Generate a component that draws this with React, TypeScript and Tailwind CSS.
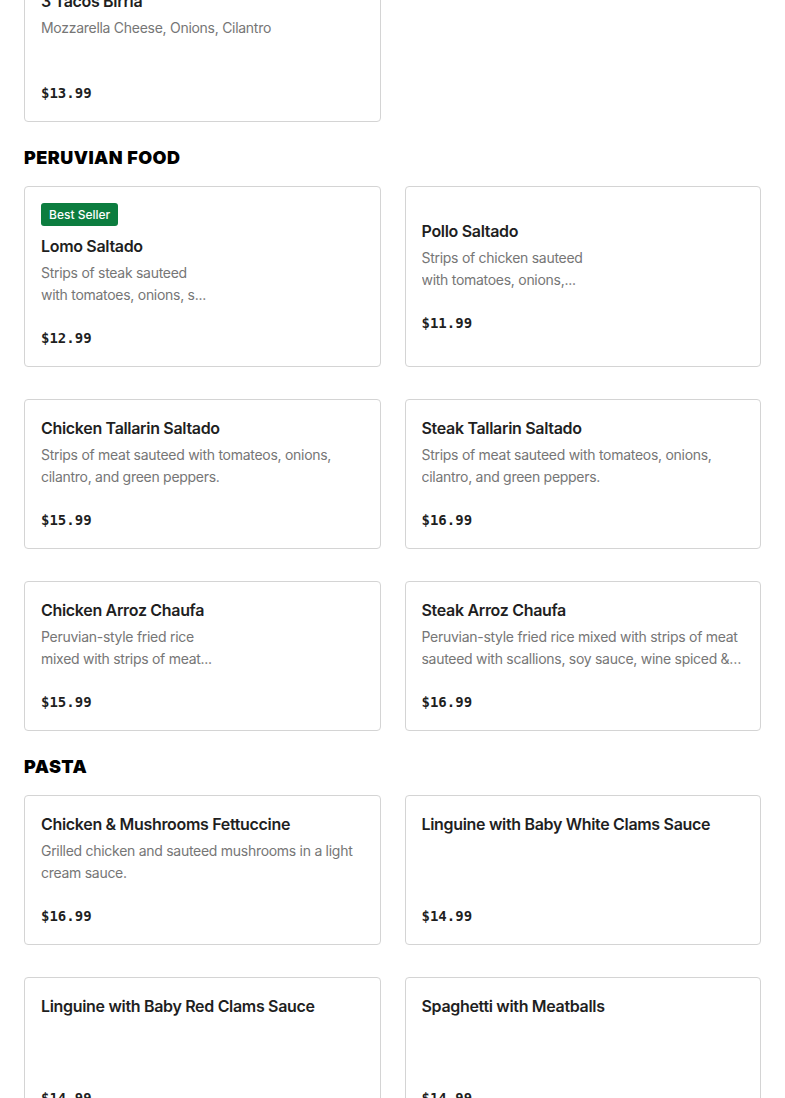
import React from 'react';

type Item = {
  name: string;
  description?: string;
  price: string;
  badge?: string;
  narrow?: boolean;
};

const sections: { title?: string; items: Item[] }[] = [
  {
    items: [
      { name: '3 Tacos Birria', description: 'Mozzarella Cheese, Onions, Cilantro', price: '$13.99' }
    ]
  },
  {
    title: 'PERUVIAN FOOD',
    items: [
      { name: 'Lomo Saltado', description: 'Strips of steak sauteed with tomatoes, onions, s...', price: '$12.99', badge: 'Best Seller', narrow: true },
      { name: 'Pollo Saltado', description: 'Strips of chicken sauteed with tomatoes, onions,...', price: '$11.99', narrow: true },
      { name: 'Chicken Tallarin Saltado', description: 'Strips of meat sauteed with tomateos, onions, cilantro, and green peppers.', price: '$15.99' },
      { name: 'Steak Tallarin Saltado', description: 'Strips of meat sauteed with tomateos, onions, cilantro, and green peppers.', price: '$16.99' },
      { name: 'Chicken Arroz Chaufa', description: 'Peruvian-style fried rice mixed with strips of meat...', price: '$15.99', narrow: true },
      { name: 'Steak Arroz Chaufa', description: 'Peruvian-style fried rice mixed with strips of meat sauteed with scallions, soy sauce, wine spiced & seasonings.', price: '$16.99' }
    ]
  },
  {
    title: 'PASTA',
    items: [
      { name: 'Chicken & Mushrooms Fettuccine', description: 'Grilled chicken and sauteed mushrooms in a light cream sauce.', price: '$16.99' },
      { name: 'Linguine with Baby White Clams Sauce', price: '$14.99' },
      { name: 'Linguine with Baby Red Clams Sauce', price: '$14.99' },
      { name: 'Spaghetti with Meatballs', price: '$14.99' }
    ]
  }
];

const MenuCard = ({ item }: { item: Item }) => (
  <div className="flex flex-col justify-center border border-[#d4d4d4] rounded-[4px] bg-white p-4">
    {item.badge && (
      <div className="flex mb-2">
        <span className="bg-[#0c7d3f] text-white text-[12px] leading-[23px] font-medium px-2 rounded-[3px]">
          {item.badge}
        </span>
      </div>
    )}
    <h3 className="text-[16px] leading-6 font-semibold tracking-[-0.02em] text-[#1f1f1f]">{item.name}</h3>
    <p className={`mt-1 h-[44px] text-[14px] leading-[22px] tracking-[-0.02em] text-[#767676] line-clamp-2 ${item.narrow ? 'w-[176px]' : ''}`}>
      {item.description}
    </p>
    <div className="mt-[21px] text-[14px] leading-[23px] font-bold text-[#1f1f1f] font-['DejaVu_Sans_Mono',monospace]">
      {item.price}
    </div>
  </div>
);

export default function App() {
  return (
    <div className="min-h-screen bg-white font-['Inter',sans-serif]">
      <div className="px-6 -mt-[28px]">
        {sections.map((section, i) => (
          <section key={i}>
            {section.title && (
              <h2 className="mt-[22px] mb-[14px] text-[18px] leading-7 font-black tracking-[0.025em] text-black">
                {section.title}
              </h2>
            )}
            <div className="grid grid-cols-2 gap-x-6 gap-y-8">
              {section.items.map((item) => (
                <MenuCard key={item.name} item={item} />
              ))}
            </div>
          </section>
        ))}
      </div>
    </div>
  );
}
